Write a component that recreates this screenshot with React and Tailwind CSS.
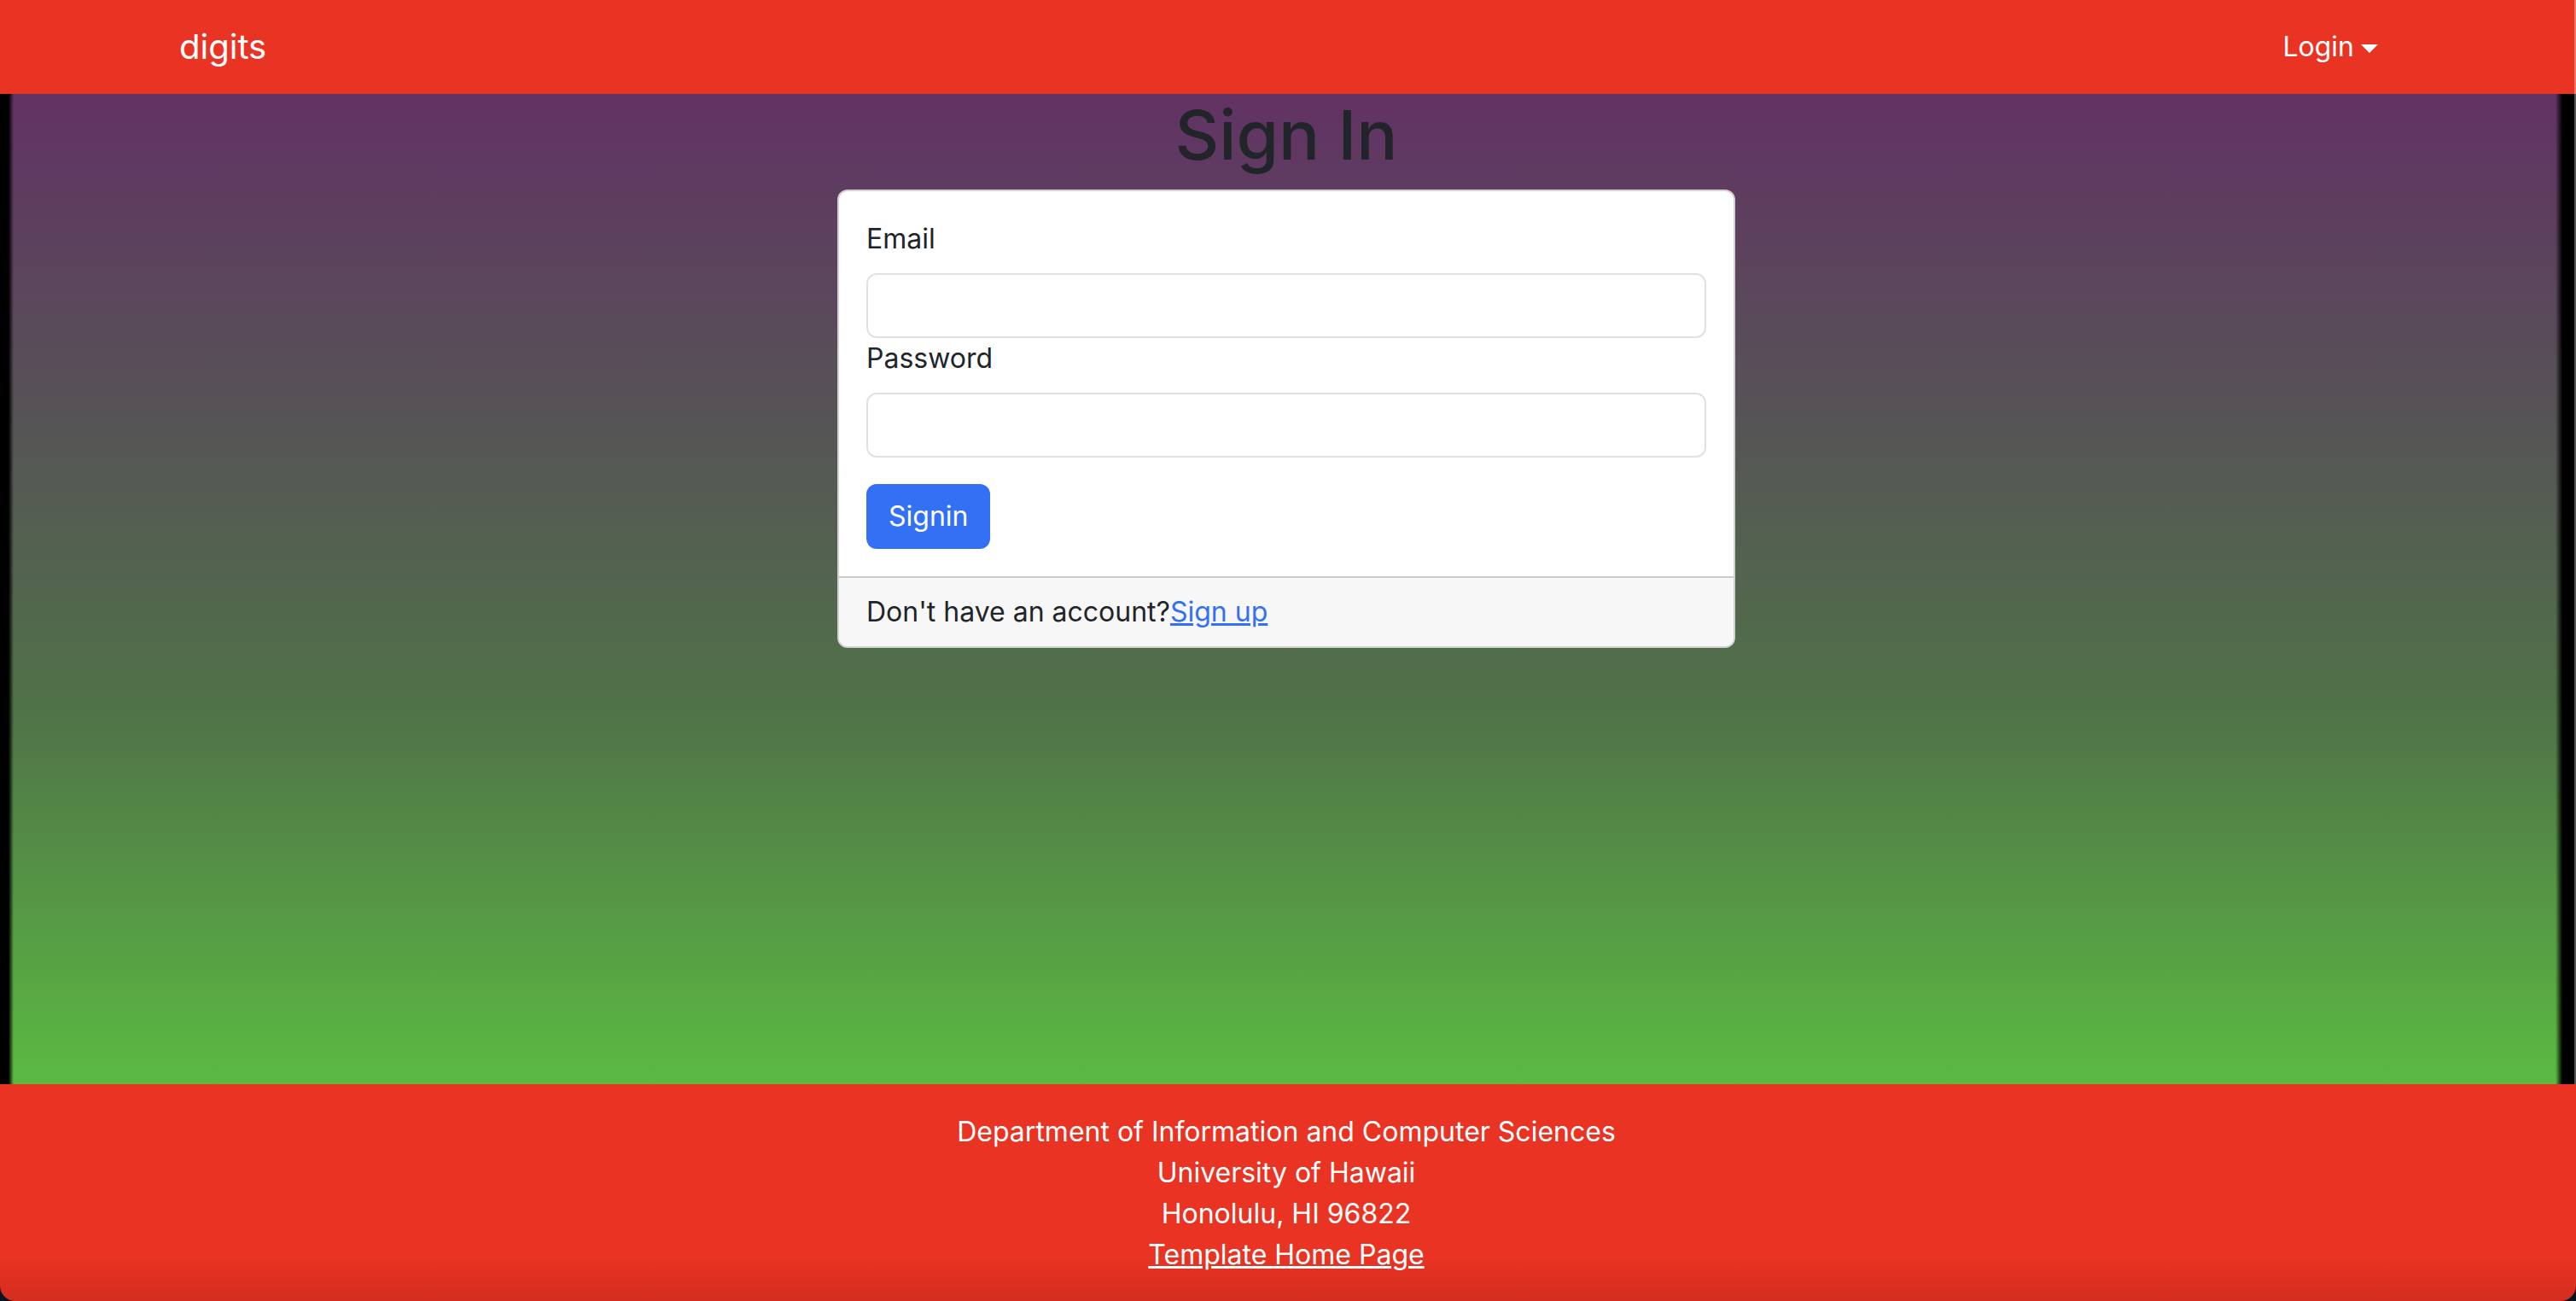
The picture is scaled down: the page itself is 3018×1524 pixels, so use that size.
export default function App() {
  return (
    <div className="flex flex-col h-[1524px] bg-[#0b1424] font-['Inter','Liberation_Sans',sans-serif]">
      <nav className="h-[110px] shrink-0 bg-[#e93323] border-r-2 border-r-[#f2776c] pr-[4px]">
        <div className="w-[2640px] h-full mx-auto px-[24px] flex items-center justify-between">
          <a className="text-white text-[40px] leading-[60px]">digits</a>
          <button className="flex items-center px-[16px] text-white text-[32px] leading-[48px]">
            Login
            <span className="ml-[8px] mt-[4px] border-t-[10px] border-t-white border-x-[10px] border-x-transparent"></span>
          </button>
        </div>
      </nav>

      <main className="h-[1160px] shrink-0 pr-[4px] bg-[linear-gradient(to_right,#000_10px,transparent_16px,transparent_calc(100%-24px),#000_calc(100%-16px),#000_calc(100%-2px),#555_calc(100%-2px)),linear-gradient(to_bottom,#623264,#565456_33%,#507248_62%,#5bba42)]">
        <h1 className="text-center text-[80px] leading-[96px] font-medium text-[#212529] mb-[16px]">Sign In</h1>
        <div className="w-[1052px] mx-auto bg-white border-2 border-[rgba(0,0,0,0.175)] rounded-[12px]">
          <div className="p-[32px]">
            <label className="block text-[32px] leading-[48px] text-[#212529] mb-[16px]">Email</label>
            <input type="email" className="block w-full h-[76px] border-2 border-[#dee2e6] rounded-[12px] bg-white" />
            <label className="block text-[32px] leading-[48px] text-[#212529] mb-[16px]">Password</label>
            <input type="password" className="block w-full h-[76px] border-2 border-[#dee2e6] rounded-[12px] bg-white" />
            <button className="mt-[31px] h-[76px] px-[26px] bg-[#3470f4] text-white text-[32px] leading-[48px] rounded-[12px]">
              Signin
            </button>
          </div>
          <div className="bg-[#f7f7f7] border-t-2 border-t-[rgba(0,0,0,0.175)] rounded-b-[10px] px-[32px] py-[16px] text-[32px] leading-[48px] text-[#212529]">
            Don't have an account?<a className="text-[#3470f4] underline">Sign up</a>
          </div>
        </div>
      </main>

      <footer className="flex-1 rounded-b-[18px] pr-[4px] bg-[linear-gradient(to_bottom,#e93323_80%,#d42d1f)] pt-[32px] text-center text-white text-[32px] leading-[48px]">
        <p>Department of Information and Computer Sciences</p>
        <p>University of Hawaii</p>
        <p>Honolulu, HI 96822</p>
        <p><a className="underline">Template Home Page</a></p>
      </footer>
    </div>
  );
}
